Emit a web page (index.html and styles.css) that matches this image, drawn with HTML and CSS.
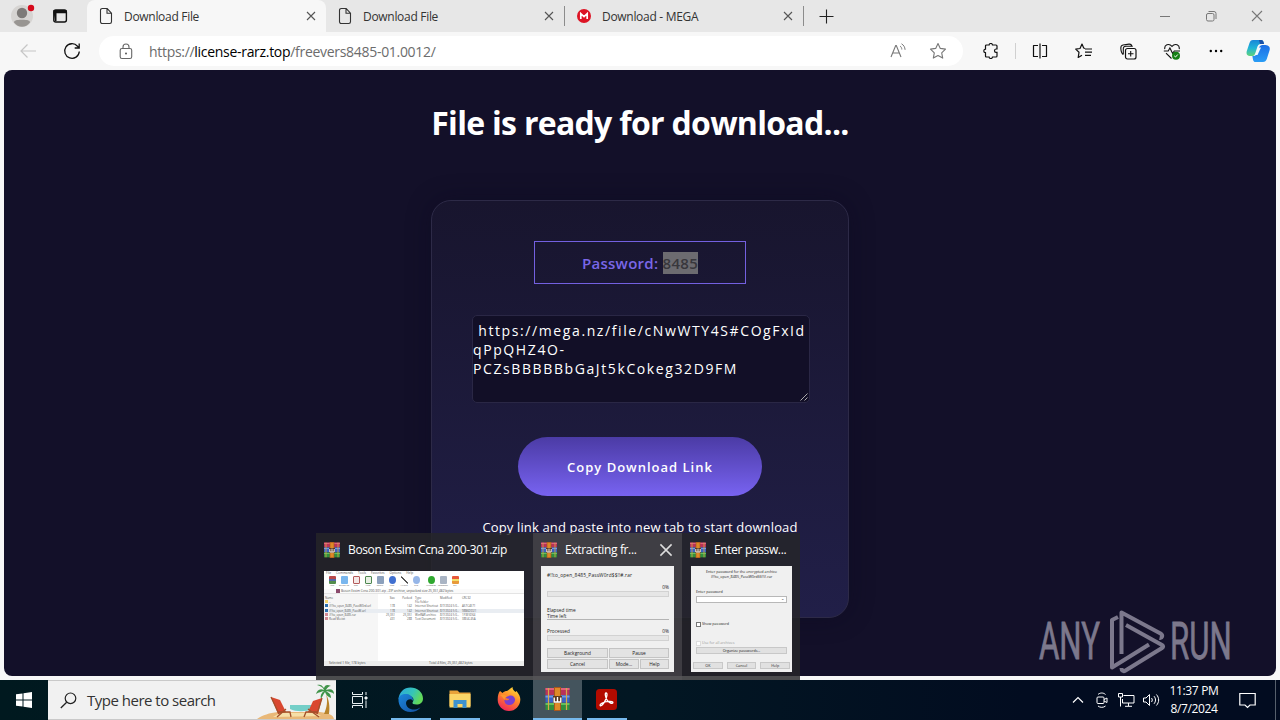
FILE: index.html
```html
<!doctype html>
<html lang="en">
  <head>
    <meta charset="UTF-8" />
    <meta name="viewport" content="width=device-width, initial-scale=1.0" />
    <title>Download File</title>
    <link rel="stylesheet" href="styles.css">
  </head>
  <body>
    <!-- shared icons -->
    <svg class="sprite" width="0" height="0">
      <symbol id="i-file" viewBox="0 0 14 18">
        <path d="M1.5 3.2a1.7 1.7 0 0 1 1.7-1.7h5l4.3 4.6v8.7a1.7 1.7 0 0 1-1.7 1.7H3.2a1.7 1.7 0 0 1-1.7-1.7zM8 1.7v4.6h4.4" fill="none" stroke="#333" stroke-width="1.1" />
      </symbol>
      <symbol id="i-close" viewBox="0 0 10 10">
        <path d="M1 1l8 8M9 1L1 9" fill="none" stroke="currentColor" stroke-width="1.1" />
      </symbol>
      <symbol id="i-rar" viewBox="0 0 24 24">
        <path d="M0 1h24v7H0z" fill="#b8325a" />
        <path d="M0 8.5h24v7H0z" fill="#3a62c4" />
        <path d="M0 16h24v7H0z" fill="#2f8f3c" />
        <path d="M0 1h24v2H0z" fill="#e0607c" />
        <path d="M0 8.5h24v2H0z" fill="#6f97ea" />
        <path d="M0 16h24v2H0z" fill="#62bf5c" />
        <path d="M3 1v22M21 1v22" stroke="#d8a84a" stroke-width="1.2" />
        <path d="M8.5 0h7v24h-7z" fill="#a8561c" />
        <path d="M9.5 1h5v22h-5z" fill="#dd8a28" />
        <path d="M7.5 9h9v7h-9z" fill="#5b3a20" />
        <path d="M8.700 10.500v4.500h6.600v-4.500M12 10v4.500" fill="none" stroke="#fff" stroke-width="1.400" />
      </symbol>
    </svg>

    <div class="browser">
      <div class="tabs">
        <div class="profile">
          <svg width="32" height="32" viewBox="0 0 32 32">
            <circle cx="16" cy="16" r="11" fill="#d6d4d2" />
            <circle cx="16" cy="13" r="5.2" fill="#7d7a78" />
            <path d="M8 22.5c0-2 2-2.8 8-2.8s8 .8 8 2.8c-2 2.8-5 4.3-8 4.3s-6-1.5-8-4.3z" fill="#989592" />
            <circle cx="25" cy="8" r="3.2" fill="#d60a1c" />
          </svg>
        </div>
        <div class="workspaces">
          <svg width="16" height="16" viewBox="0 0 16 16">
            <rect x="1.8" y="2" width="12.6" height="12" rx="2" fill="none" stroke="#111" stroke-width="1.4" />
            <path d="M1.5 2h13v3.2h-13zM1.5 4h3v9h-1.5z" fill="#111" />
          </svg>
        </div>
        <div class="tab active">
          <svg class="tab-icon" width="14" height="18"><use href="#i-file" /></svg>
          <span class="tab-title">Download File</span>
          <svg class="tab-close" width="10" height="10"><use href="#i-close" /></svg>
        </div>
        <div class="tab">
          <svg class="tab-icon" width="14" height="18"><use href="#i-file" /></svg>
          <span class="tab-title">Download File</span>
          <svg class="tab-close" width="10" height="10"><use href="#i-close" /></svg>
        </div>
        <div class="tab">
          <svg class="tab-icon" width="14" height="14" viewBox="0 0 14 14">
            <circle cx="7" cy="7" r="7" fill="#dd1425" />
            <path d="M3.8 10V4.6L7 7.6l3.2-3V10" fill="none" stroke="#fff" stroke-width="1.7" />
          </svg>
          <span class="tab-title">Download - MEGA</span>
          <svg class="tab-close" width="10" height="10"><use href="#i-close" /></svg>
        </div>
        <svg class="new-tab" width="15" height="15" viewBox="0 0 15 15">
          <path d="M7.5 .5v14M.5 7.5h14" stroke="#222" stroke-width="1.1" />
        </svg>
        <div class="window-buttons">
          <svg width="12" height="12" viewBox="0 0 12 12"><path d="M1 6.5h10" stroke="#777" /></svg>
          <svg width="12" height="12" viewBox="0 0 12 12">
            <rect x="1.5" y="3.5" width="7.5" height="7.5" rx="1.5" fill="none" stroke="#777" />
            <path d="M3.5 1.5h5.5a2 2 0 0 1 2 2v5.5" fill="none" stroke="#777" />
          </svg>
          <svg width="12" height="12" viewBox="0 0 12 12"><path d="M1 1l10 10M11 1L1 11" stroke="#777" stroke-width="1.1" /></svg>
        </div>
      </div>

      <div class="toolbar">
        <svg class="nav-back" width="18" height="16" viewBox="0 0 18 16">
          <path d="M17 8H2M8.5 1.500L2 8l6.500 6.500" fill="none" stroke="#c6c6c6" stroke-width="1.2" />
        </svg>
        <svg class="nav-reload" width="18" height="18" viewBox="0 0 18 18">
          <path d="M16.3 9.5A7.3 7.3 0 1 1 14.5 4.2L16 6M16.2 1.5V6h-4.5" fill="none" stroke="#111" stroke-width="1.3" />
        </svg>
        <div class="address">
          <svg class="lock" width="14" height="17" viewBox="0 0 14 17">
            <rect x="1.2" y="5.5" width="11.5" height="10" rx="1.8" fill="none" stroke="#666" stroke-width="1.1" />
            <path d="M4 5.5V4a3 3 0 0 1 6 0v1.5" fill="none" stroke="#666" stroke-width="1.1" />
            <circle cx="7" cy="10.5" r="1" fill="#555" />
          </svg>
          <span class="url">https://<b>license-rarz.top</b>/freevers8485-01.0012/</span>
          <svg class="read-aloud" width="16" height="16" viewBox="0 0 16 16">
            <path d="M1 14L5.7 2.5h.6L11 14M2.6 10h6.8" fill="none" stroke="#777" stroke-width="1.1" />
            <path d="M10 3c1.2.8 1.8 2 1.8 3.5M11.5 .8c2.2 1.3 3.4 3.2 3.6 6" fill="none" stroke="#777" />
          </svg>
          <svg class="star" width="18" height="18" viewBox="0 0 18 18">
            <path d="M9 1.5l2.3 4.9 5.2.7-3.8 3.7 1 5.3L9 13.500l-4.700 2.600 1-5.300L1.500 7.100l5.200-.7z" fill="none" stroke="#777" stroke-width="1.1" stroke-linejoin="round" />
          </svg>
        </div>
        <div class="tools">
          <div class="tool">
            <svg width="16" height="16" viewBox="0 0 16 16">
              <path d="M3.5 2h2.6c.1-2 3.3-2 3.4 0h3.5c.6 0 1 .4 1 1v3h-1c-2 .1-2 3.3 0 3.4h1V13c0 .6-.4 1-1 1H9.5c-.1 2-3.3 2-3.4 0H3.5c-.6 0-1-.4-1-1V9.7c-2.3-.1-2.3-3.4 0-3.5V3c0-.6.4-1 1-1z" fill="none" stroke="#111" stroke-width="1.2" />
            </svg>
          </div>
          <div class="tool-sep"></div>
          <div class="tool">
            <svg width="16" height="16" viewBox="0 0 16 16">
              <path d="M6 2.5H1.5v11H6M10 2.5h4.5v11H10M8 .5v15" fill="none" stroke="#111" stroke-width="1.2" stroke-linejoin="round" />
            </svg>
          </div>
          <div class="tool">
            <svg width="18" height="16" viewBox="0 0 18 16">
              <path d="M10 5.5L8.7 5 7 1 5 5.5l-4.3.6L4 9.3 3.2 14.500 7 12.200M10 6h7M10 9.200h7M10 12.400h6" fill="none" stroke="#111" stroke-width="1.2" stroke-linejoin="round" />
            </svg>
          </div>
          <div class="tool">
            <svg width="17" height="17" viewBox="0 0 17 17">
              <rect x="5.5" y="5.5" width="10.5" height="10.5" rx="2" fill="none" stroke="#111" stroke-width="1.2" />
              <path d="M10.7 8v5.500M8 10.700h5.500M3.200 11.500C1.500 10.500 1 8.500 .8 5.300 .7 3 1.500 2.300 3 2l6-.9c1.800-.2 2.500.5 2.900 2M3.300 11.500V6c0-2 .8-2.700 2.500-2.700h7" fill="none" stroke="#111" stroke-width="1.1" />
            </svg>
          </div>
          <div class="tool">
            <svg width="18" height="17" viewBox="0 0 18 17">
              <path d="M1.8 6.2C1 2 5.8-.3 9 3.3 12.200-.3 17 2 16.200 6.200M.8 8h4.400l1.700-3 2.700 5.500L11.300 8H17M3 10.200l5.500 5.300" fill="none" stroke="#111" stroke-width="1.1" />
              <circle cx="13" cy="12.7" r="4" fill="#168016" />
              <path d="M11.2 12.800l1.300 1.200 2.300-2.500" fill="none" stroke="#fff" />
            </svg>
          </div>
          <div class="tool">
            <svg width="14" height="4" viewBox="0 0 14 4">
              <circle cx="1.8" cy="2" r="1.2" /><circle cx="7" cy="2" r="1.2" /><circle cx="12.2" cy="2" r="1.2" />
            </svg>
          </div>
          <div class="tool copilot">
            <svg width="24" height="24" viewBox="0 0 24 24">
              <defs>
                <linearGradient id="cop-a" x1="0" y1="0" x2="0" y2="1"><stop offset="0" stop-color="#1a86d8" /><stop offset=".5" stop-color="#20b4d8" /><stop offset="1" stop-color="#5fd37a" /></linearGradient>
                <linearGradient id="cop-b" x1="0" y1="1" x2="0" y2="0"><stop offset="0" stop-color="#2a9df5" /><stop offset="1" stop-color="#1c6ee6" /></linearGradient>
              </defs>
              <path d="M7 1h8c2 0 2.500 1.500 3 4h-3c-2.500 0-3.200 1.500-4 4l-2 6c-.8 1.700-1.800 2-4 2C1 17 0 15 .8 12L3.500 4C4.200 2 5 1 7 1z" fill="url(#cop-a)" />
              <path d="M17 23H9.500C7.500 23 7 21.500 6.400 17c2.600 0 3.800-.5 4.700-3.500l2-5C14 6.500 15 6 18 6c5 0 6.500 2 5.500 5.500L20.800 20c-.8 2-1.800 3-3.800 3z" fill="url(#cop-b)" />
              <path d="M13 1h2c2 0 2.500 1.500 3 4h-4z" fill="#184fa8" />
              <path d="M12.500 8.500h2.500l-3.500 7.500H9z" fill="#f2fbff" />
            </svg>
          </div>
        </div>
      </div>

      <main class="page">
        <h1>File is ready for download...</h1>
        <div class="card">
          <div class="password">Password: <mark>8485</mark></div>
          <div class="link-box">
            <p>&nbsp;https://mega.nz/file/cNwWTY4S#COgFxId<br>qPpQHZ4O-<br>PCZsBBBBBbGaJt5kCokeg32D9FM</p>
            <svg class="grip" width="8" height="8" viewBox="0 0 8 8"><path d="M.5 7.500l7-7M4.500 7.500l3-3" stroke="#aaa" /></svg>
          </div>
          <button class="copy-btn">Copy Download Link</button>
          <p class="hint">Copy link and paste into new tab to start download</p>
        </div>
        <svg class="watermark" width="196" height="66" viewBox="0 0 196 66">
          <g fill="#7c788c" stroke="#7c788c" stroke-width=".8">
            <text transform="translate(1 51) scale(.6 1)">ANY</text>
            <text transform="translate(132 51) scale(.6 1)">RUN</text>
          </g>
          <path d="M80 9l-6 3v47.500l37-23M83.500 46V4.500l39 21c3 2 1.500 5-1 4.500M88 17l36 20c1.500 1 1.500 2 0 3L87.500 62.500c-2.500 1.500-4 0-4-2.500" fill="none" stroke="#7c788c" stroke-width="4" stroke-linejoin="round" />
        </svg>
      </main>
    </div>

    <div class="taskbar">
      <div class="start">
        <svg width="16" height="16" viewBox="0 0 16 16">
          <path d="M0 2.300L6.500 1.400v6.100H0zM7.500 1.200L16 0v7.500H7.500zM0 8.500h6.500v6.100L0 13.700zM7.500 8.500H16V16l-8.500-1.200z" fill="#fff" />
        </svg>
      </div>
      <div class="search">
        <svg class="search-icon" width="17" height="17" viewBox="0 0 17 17">
          <circle cx="10.5" cy="6.3" r="5.3" fill="none" stroke="#222" stroke-width="1.2" />
          <path d="M6.7 10.200L.8 16" stroke="#222" stroke-width="1.3" />
        </svg>
        <span>Type here to search</span>
        <svg class="beach" width="80" height="38" viewBox="0 0 80 38">
          <path d="M1 38c6-4 12-6 21-7h42c9 1 13 3 14 7z" fill="#e9b878" />
          <path d="M24 32h35l6 3-48 1z" fill="#f6dfa8" />
          <path d="M34 24h22v4c-6 3-16 3-22 0z" fill="#74cfc8" />
          <path d="M70 13c3 6 4 12 3 20h-5c3-7 4-13 2-20z" fill="#b8842c" />
          <path d="M68 9c-5-2-7 1-8 4 3-2 5-2 8-3-3 2-4 5-3 8 1-2 2-4 4-7 1 3 3 5 6 6 0-4-2-5-5-7 4 1 6 1 8 3 0-4-3-6-8-4 1-2 3-4 5-4-4-2-6-1-7 2-2-3-4-4-7-3 3 1 6 2 7 5z" fill="#3f9348" />
          <path d="M15 16l9 3 6 12-8 2z" fill="#d9472f" />
          <path d="M66 17l-9 3-5 11 10 2z" fill="#d9472f" />
          <path d="M15 16l8 17M22 31h12l1 5M30 28l-9 8M66 17l-5 16M61 31H50l-2 5M52 28l11 8" fill="none" stroke="#a3502a" stroke-width="1.3" />
        </svg>
      </div>
      <div class="task-view">
        <svg width="16" height="16" viewBox="0 0 16 16" fill="none" stroke="#e8f0f2">
          <path d="M.5 0v2.500h10V0M.5 16v-2.500h10V16M.5 4.500h10v7H.5zM14 0v3M14 8.500V16" />
          <path d="M13 5h2v2h-2z" fill="#fff" />
        </svg>
      </div>
      <div class="apps">
        <div class="app running">
          <svg width="25" height="25" viewBox="0 0 25 25">
            <defs>
              <linearGradient id="edge-a" x1="0" y1="0" x2="1" y2=".4"><stop offset="0" stop-color="#2ba6e0" /><stop offset=".6" stop-color="#35c4b8" /><stop offset="1" stop-color="#62d95a" /></linearGradient>
              <linearGradient id="edge-b" x1="0" y1="0" x2="1" y2="1"><stop offset="0" stop-color="#1b87dc" /><stop offset="1" stop-color="#1550a0" /></linearGradient>
            </defs>
            <path d="M.5 12.500C1 5 6 .5 12.500 .5S25 5 25 11.500c0 4-3 6-6.500 6-3 0-4.500-1-4-2 2-2.500 1-6.500-4-6.500C6 9 1 10 .5 12.500z" fill="url(#edge-a)" />
            <path d="M.5 12C1 8 5 6.500 9 7c4 .5 6.500 4 6 7-1-3-7-2-7 2s4 7 9 6.500c2-.2 4-1.200 5.500-2C20 23.500 16.500 25 12.500 25 5 25 0 19 .5 12z" fill="url(#edge-b)" />
          </svg>
        </div>
        <div class="app running">
          <svg width="22" height="20" viewBox="0 0 22 20">
            <path d="M.5 1.500h8l2 2h11V17H.5z" fill="#e8a33a" />
            <path d="M.5 5h21v13.500H.5z" fill="#fbd668" />
            <path d="M4.500 19v-8h13v8h-4v-4h-5v4z" fill="#3d92cf" />
          </svg>
        </div>
        <div class="app">
          <svg width="24" height="24" viewBox="0 0 24 24">
            <defs><linearGradient id="fox" x1=".8" y1="0" x2=".3" y2="1"><stop offset="0" stop-color="#ffe03a" /><stop offset=".45" stop-color="#ff8a2a" /><stop offset="1" stop-color="#f0245a" /></linearGradient></defs>
            <path d="M3 4l2.500 2C7 4.500 8.500 4 10 4c2-1 3-2.500 5.500-4 0 2.500 1.500 3.500 3 5l1-1c3 4 4 6 3.800 9-.3 6-5 11-11.300 11S.8 19 .7 13C.6 9 1.500 6 3 4z" fill="url(#fox)" />
            <path d="M8 9c2 1.500 3 0 5-.5 3-.5 5.500 2 5 5s-3.500 5-6.500 4.500S7 15 7.500 12.500c1.500 1.500 4.500 1 5-1-2 .5-4 0-4.500-2.500z" fill="#7a3fd0" />
            <path d="M3 8c3-1.500 6 0 7 2-1.500 0-2.500 1-2.500 3C6 11 5 9 3 8z" fill="#ff9a2e" />
          </svg>
        </div>
        <div class="app selected">
          <svg width="25" height="24"><use href="#i-rar" /></svg>
        </div>
        <div class="app running">
          <svg width="21" height="21" viewBox="0 0 21 21">
            <rect width="21" height="21" rx="3.5" fill="#b30b00" />
            <path d="M10 4c1.800 0 1 4.500-1.200 8.300C7 15.500 5 17.500 4.200 16.500c-1-1.400 3.500-3.600 8-4.100 3.500-.4 5 .3 4.700 1.300-.6 1.500-4.500-.2-6-3C9.500 8.300 8.600 4 10 4z" fill="none" stroke="#fff" stroke-width="1.3" />
          </svg>
        </div>
      </div>
      <div class="tray">
        <svg width="12" height="8" viewBox="0 0 12 8"><path d="M1 6.500L6 1.500l5 5" fill="none" stroke="#fff" stroke-width="1.2" /></svg>
        <svg class="camera" width="12" height="16" viewBox="0 0 12 16" fill="none" stroke="#fff">
          <rect x="1" y="5" width="7" height="6.5" rx="1" />
          <path d="M8 7.500l3-1.500v4.500L8 9M2 2.500C4 .5 7.500 .5 9.500 2.500M2 14c2 1.800 5.500 1.800 7.500 0" />
        </svg>
        <svg class="network" width="17" height="14" viewBox="0 0 17 14" fill="none" stroke="#fff">
          <path d="M5.500 2.500h10.500v7.500H4.500V6M10.500 10v3M7 13.300h7M.5 .5h4v3.500h-4zM2.500 4v9.500" />
        </svg>
        <svg class="volume" width="17" height="14" viewBox="0 0 17 14" fill="none" stroke="#fff">
          <path d="M.5 5v4h2.500l3.500 3.500v-11L3 5zM8.500 5c1 1.300 1 2.700 0 4M11 3.200c2 2.300 2 5.300 0 7.600M13.400 1.500c3 3.300 3 7.700 0 11" />
        </svg>
        <div class="clock">11:37 PM<br>8/7/2024</div>
        <svg class="notice" width="17" height="17" viewBox="0 0 17 17">
          <path d="M.8 1.500h15.400v11.500H11L8.500 15.500 6 13H.8z" fill="none" stroke="#fff" stroke-width="1.2" />
        </svg>
        <div class="show-desktop"></div>
      </div>
    </div>

    <!-- taskbar window previews -->
    <div class="previews">
      <div class="preview archive">
        <div class="preview-head">
          <svg width="16" height="16"><use href="#i-rar" /></svg>
          <span>Boson Exsim Ccna 200-301.zip</span>
        </div>
        <div class="thumb">
          <div class="mini-menu"><span>File</span><span>Commands</span><span>Tools</span><span>Favorites</span><span>Options</span><span>Help</span></div>
          <div class="mini-tools">
            <div class="mini-tool red"><i></i>Add</div>
            <div class="mini-tool sky"><i></i>Extract To</div>
            <div class="mini-tool rose"><i></i>Test</div>
            <div class="mini-tool leaf"><i></i>View</div>
            <div class="mini-tool slate"><i></i>Delete</div>
            <div class="mini-tool blue round"><i></i>Find</div>
            <div class="mini-tool wand"><i></i>Wizard</div>
            <div class="mini-tool pale round"><i></i>Info</div>
            <div class="mini-tool green round gap"><i></i>VirusScan</div>
            <div class="mini-tool gray"><i></i>Comment</div>
            <div class="mini-tool orange"><i></i>SFX</div>
          </div>
          <div class="mini-path"><i></i>Boson Exsim Ccna 200-301.zip - ZIP archive, unpacked size 25,351,482 bytes</div>
          <div class="mini-list">
            <div class="mini-row"><span>Name</span><span>Size</span><span>Packed</span><span>Type</span><span>Modified</span><span>CRC32</span></div>
            <div class="mini-row up"><span><i></i>..</span><span></span><span></span><span>File folder</span><span></span><span></span></div>
            <div class="mini-row"><span><i></i>#!!!to_open_8485_PassW0rd.url</span><span>178</span><span>142</span><span>Internet Shortcut</span><span>8/7/2024 5:0...</span><span>A57C4E71</span></div>
            <div class="mini-row"><span><i></i>#!!to_open_8485_PassW.url</span><span>178</span><span>142</span><span>Internet Shortcut</span><span>8/7/2024 5:0...</span><span>98B6DD21</span></div>
            <div class="mini-row rar"><span><i></i>#!!to_open_8485.rar</span><span>25,351</span><span>25,351</span><span>WinRAR archive</span><span>8/7/2024 5:0...</span><span>1F3E5D64</span></div>
            <div class="mini-row rar"><span><i></i>Read Me.txt</span><span>431</span><span>288</span><span>Text Document</span><span>8/7/2024 5:0...</span><span>38E4C45A</span></div>
          </div>
          <div class="mini-status"><span>Selected 1 file, 178 bytes</span><span>Total 4 files, 25,351,482 bytes</span></div>
        </div>
      </div>
      <div class="preview extract">
        <div class="preview-head">
          <svg width="16" height="16"><use href="#i-rar" /></svg>
          <span>Extracting fr...</span>
          <svg class="preview-close" width="14" height="14"><use href="#i-close" /></svg>
        </div>
        <div class="thumb">
          <div class="file-name">#!!to_open_8485_PassW0rd$$!!#.rar</div>
          <div class="percent">0%</div>
          <div class="bar"></div>
          <div class="times">Elapsed time<br>Time left</div>
          <div class="processed"><span>Processed</span><span>0%</span></div>
          <div class="bar"></div>
          <div class="mini-buttons">
            <span>Background</span><span class="wide">Pause</span>
            <span>Cancel</span><span>Mode...</span><span>Help</span>
          </div>
        </div>
      </div>
      <div class="preview enter">
        <div class="preview-head">
          <svg width="16" height="16"><use href="#i-rar" /></svg>
          <span>Enter passw...</span>
        </div>
        <div class="thumb">
          <div class="ask">Enter password for the encrypted archive<br>#!!to_open_8485_PassW0rd$$!!#.rar</div>
          <div class="label">Enter password</div>
          <div class="field">⌄</div>
          <div class="check"><i></i>Show password</div>
          <div class="check off"><i></i>Use for all archives</div>
          <div class="organize">Organize passwords...</div>
          <div class="answers"><span>OK</span><span>Cancel</span><span>Help</span></div>
        </div>
      </div>
    </div>
  </body>
</html>
```
FILE: styles.css
```css
* {
  margin: 0;
  padding: 0;
  box-sizing: border-box;
}

body {
  width: 1280px;
  height: 720px;
  overflow: hidden;
  display: flex;
  flex-direction: column;
  position: relative;
  font-family: "Open Sans", "Noto Sans", sans-serif;
  background: #f7f7f7;
}

svg {
  display: block;
  flex-shrink: 0;
}

.sprite {
  position: absolute;
}

.browser {
  height: 680px;
  display: flex;
  flex-direction: column;
}

/* tab strip */
.tabs {
  height: 32px;
  display: flex;
  align-items: center;
  background: #e7e7e7;
  font-size: 12px;
  color: #333;
}

.profile {
  width: 32px;
  margin-left: 6px;
}

.workspaces {
  width: 49px;
  padding-left: 14px;
}

.tab {
  width: 239px;
  height: 20px;
  display: flex;
  align-items: center;
  padding: 0 10px 0 12px;
  border-right: 1px solid #8c8c8c;
}

.tab.active {
  height: 32px;
  background: #f7f7f7;
  border-right: none;
  border-radius: 8px 8px 0 0;
}

.tab-icon {
  width: 14px;
}

.tab-title {
  flex: 1;
  margin-left: 11px;
  letter-spacing: -0.3px;
}

.tab-close {
  color: #555;
}

.new-tab {
  margin-left: 15px;
}

.window-buttons {
  display: flex;
  gap: 34px;
  margin-left: auto;
  margin-right: 17px;
}

/* toolbar */
.toolbar {
  height: 38px;
  display: flex;
  align-items: center;
  background: #f7f7f7;
}

.nav-back {
  margin-left: 19px;
}

.nav-reload {
  margin-left: 26px;
}

.address {
  width: 864px;
  height: 30px;
  margin-left: 18px;
  padding: 0 16px 0 20px;
  display: flex;
  align-items: center;
  background: #fff;
  border-radius: 15px;
}

.url {
  flex: 1;
  margin-left: 16px;
  font-size: 14px;
  letter-spacing: -0.3px;
  color: #6c6c6c;
}

.url b {
  font-weight: 400;
  color: #000;
}

.star {
  margin-left: 23px;
}

.tools {
  display: flex;
  margin-left: 6px;
}

.tool {
  width: 44px;
  height: 30px;
  display: flex;
  align-items: center;
  justify-content: center;
}

.tool-sep {
  width: 1px;
  height: 16px;
  margin: 7px 2px;
  background: #d0d0d0;
}

.copilot {
  width: 40px;
}

/* page */
.page {
  position: relative;
  height: 606px;
  margin: 0 4px;
  display: flex;
  flex-direction: column;
  align-items: center;
  background: #131029;
  border-radius: 8px;
  color: #fff;
}

h1 {
  margin-top: 31px;
  font-size: 32px;
  line-height: 44px;
  letter-spacing: -0.7px;
  white-space: nowrap;
}

.card {
  width: 418px;
  height: 418px;
  margin-top: 55px;
  padding-top: 40px;
  display: flex;
  flex-direction: column;
  align-items: center;
  background: linear-gradient(#18152e, #211f48);
  border: 1px solid #2d2a47;
  border-radius: 20px;
  box-shadow: 0 0 24px rgba(10, 8, 30, 0.4);
}

.password {
  width: 212px;
  height: 43px;
  border: 1px solid #7360e0;
  color: #7a67e8;
  font-size: 15px;
  font-weight: 600;
  line-height: 42px;
  letter-spacing: 0.3px;
  text-align: center;
}

.password mark {
  display: inline-block;
  height: 22px;
  line-height: 23px;
  background: #6c6b70;
  color: #38373c;
}

.link-box {
  position: relative;
  width: 338px;
  height: 88px;
  margin-top: 31px;
  margin-left: 2px;
  padding-top: 5px;
  background: #120f27;
  border: 1px solid #2a2745;
  border-radius: 5px;
  font-size: 14px;
  line-height: 19px;
  letter-spacing: 1.6px;
  white-space: nowrap;
}

.grip {
  position: absolute;
  right: 1px;
  bottom: 1px;
}

.copy-btn {
  width: 244px;
  height: 59px;
  margin-top: 34px;
  border: none;
  border-radius: 30px;
  background: linear-gradient(#4b3ba5, #7863f1);
  color: #fff;
  font-family: inherit;
  font-size: 13px;
  font-weight: 600;
  letter-spacing: 1px;
}

.hint {
  margin-top: 21px;
  font-size: 13px;
  line-height: 20px;
  letter-spacing: 0.14px;
  white-space: nowrap;
}

.watermark {
  position: absolute;
  right: 42px;
  bottom: 2px;
  font-family: Roboto, sans-serif;
  font-size: 52px;
}

/* taskbar */
.taskbar {
  height: 40px;
  display: flex;
  background: linear-gradient(90deg, #00191f, #021723 50%, #020c20 80%);
  color: #fff;
}

.start,
.task-view {
  width: 48px;
  display: flex;
  align-items: center;
  justify-content: center;
}

.search {
  width: 288px;
  display: flex;
  align-items: center;
  padding-left: 12px;
  background: #f1f1f1;
  border-top: 1px solid #c9c9c9;
  border-bottom: 1px solid #c9c9c9;
  color: #333;
  font-size: 15px;
}

.search span {
  margin-left: 10px;
  letter-spacing: -0.5px;
  white-space: nowrap;
}

.beach {
  margin-left: auto;
}

.apps {
  display: flex;
  padding-left: 2px;
}

.app {
  width: 49px;
  display: flex;
  align-items: center;
  justify-content: center;
  border-bottom: 2px solid transparent;
}

.app.running {
  background: linear-gradient(#76b9ed, #76b9ed) center bottom / 40px 2px no-repeat border-box;
}

.app.selected {
  background: #44545d;
  border-bottom-color: #76b9ed;
}

.tray {
  display: flex;
  align-items: center;
  margin-left: auto;
}

.camera {
  margin-left: 12px;
}

.network {
  margin-left: 10px;
}

.volume {
  margin-left: 8px;
}

.clock {
  width: 52px;
  margin-left: 8px;
  font-size: 12px;
  line-height: 18px;
  letter-spacing: -0.35px;
  text-align: center;
  white-space: nowrap;
}

.notice {
  margin-left: 19px;
}

.show-desktop {
  width: 5px;
  height: 40px;
  margin-left: 19px;
  border-left: 1px solid #56606c;
}

/* window previews over the taskbar */
.previews {
  position: absolute;
  left: 316px;
  bottom: 40px;
  height: 147px;
  display: flex;
  background: rgba(38, 38, 40, 0.82);
}

.preview {
  padding: 8px 8px 0;
}

.preview.archive {
  width: 217px;
}

.preview.extract {
  width: 149px;
  background: rgba(90, 88, 92, 0.5);
}

.preview.enter {
  width: 118px;
}

.preview-head {
  height: 17px;
  display: flex;
  align-items: center;
  font-size: 12px;
  white-space: nowrap;
}

.preview-head span {
  margin-left: 8px;
  color: #fff;
  letter-spacing: -0.36px;
}

.preview-close {
  margin-left: auto;
  margin-right: 1px;
  color: #ddd;
}

.thumb {
  height: 106px;
  margin-top: 8px;
  overflow: hidden;
  background: #f0f0f0;
  color: #222;
  font-size: 4.8px;
  line-height: 6px;
  white-space: nowrap;
}

.archive .thumb {
  width: 200px;
  height: 95px;
  margin-top: 13px;
  display: flex;
  flex-direction: column;
  background: #fff;
  color: #555;
  font-size: 3.2px;
  line-height: 4px;
}

.extract .thumb {
  width: 133px;
  padding: 6px 5px 0 6px;
}

.enter .thumb {
  width: 101px;
  margin-left: 1px;
  padding: 4px 5px 0;
  font-size: 3.7px;
  line-height: 4.5px;
}

.file-name {
  letter-spacing: 0.15px;
}

/* archive window */
.mini-menu {
  display: flex;
  gap: 5px;
  padding-left: 2px;
}

.mini-tools {
  height: 14px;
  display: flex;
  padding-top: 1px;
}

.mini-tool {
  width: 12px;
  display: flex;
  flex-direction: column;
  align-items: center;
  font-size: 2.2px;
  line-height: 4px;
}

.mini-tool:first-child {
  margin-left: 2px;
}

.mini-tool i {
  width: 7px;
  height: 8px;
  border-radius: 1px;
  background: #999;
}

.mini-tool.gap {
  margin-left: 3px;
}

.mini-tool.round i {
  border-radius: 50%;
}

.mini-tool.red i {
  background: linear-gradient(#b8484a 35%, #5566a8 35% 65%, #538c4c 65%);
}

.mini-tool.sky i {
  background: #79b6ee;
}

.mini-tool.rose i {
  background: #f4e8e6;
  border: 1px solid #b35a5a;
}

.mini-tool.leaf i {
  background: #e8f0e4;
  border: 1px solid #4e8750;
}

.mini-tool.slate i {
  background: #8ba0bc;
}

.mini-tool.blue i {
  background: #3f6fd0;
}

.mini-tool.wand i {
  background: linear-gradient(45deg, transparent 42%, #555 42% 58%, transparent 58%);
}

.mini-tool.pale i {
  background: #96b6e8;
}

.mini-tool.green i {
  background: #2fa82f;
}

.mini-tool.gray i {
  background: #a9b4c4;
}

.mini-tool.orange i {
  background: linear-gradient(#e8583a 35%, #f2e06a 35% 60%, #e89a3a 60%);
}

.mini-path {
  height: 5px;
  display: flex;
  padding-left: 12px;
  border-bottom: 1px solid #e4e4e4;
  background: #fafafa;
}

.mini-path i {
  width: 4px;
  height: 4px;
  margin-right: 1px;
  background: #8a4a6c;
}

.mini-list {
  flex: 1;
  padding-top: 2px;
  background: linear-gradient(90deg, #f6f6f6 54px, #fff 54px);
}

.mini-row {
  display: grid;
  grid-template-columns: 56px 14px 17px 28px 22px 20px;
  height: 4.2px;
  padding-left: 1px;
  font-size: 2.9px;
}

.mini-row:nth-child(4) {
  background: #e9edf2;
}

.mini-row span:nth-child(2),
.mini-row span:nth-child(3) {
  text-align: right;
}

.mini-row span:nth-child(4) {
  padding-left: 3px;
}

.mini-row i {
  display: inline-block;
  width: 3px;
  height: 3px;
  margin-right: 1px;
  background: #2c6fae;
}

.mini-row.up i {
  background: #f4d470;
}

.mini-row.rar i {
  background: #d48a94;
}

.mini-status {
  height: 5px;
  display: flex;
  padding-left: 5px;
  background: #ececec;
}

.mini-status span:first-child {
  width: 100px;
}

/* extraction window */
.percent {
  margin-top: 6px;
  text-align: right;
}

.bar {
  height: 6px;
  margin-top: 1px;
  background: #e6e6e6;
  border: 1px solid #d2d2d2;
}

.times {
  height: 13px;
  margin-top: 10px;
  border-bottom: 1px solid #b4b4b4;
}

.processed {
  display: flex;
  justify-content: space-between;
  margin-top: 8px;
}

.mini-buttons {
  display: grid;
  grid-template-columns: 61px 30px 29px;
  gap: 1px;
  margin-top: 7px;
  text-align: center;
}

.mini-buttons span {
  height: 10px;
  line-height: 8px;
  background: #e3e3e3;
  border: 1px solid #c4c4c4;
}

.mini-buttons .wide {
  grid-column: span 2;
}

/* password window */
.ask {
  text-align: center;
}

.label {
  margin-top: 11px;
}

.field {
  height: 7px;
  margin-top: 1px;
  padding-right: 2px;
  background: #fff;
  border: 1px solid #b8b8b8;
  line-height: 3px;
  text-align: right;
}

.check {
  display: flex;
  align-items: center;
  margin-top: 19px;
}

.check i {
  width: 5px;
  height: 5px;
  margin-right: 1px;
  background: #fff;
  border: 1px solid #777;
}

.check.off {
  margin-top: 14px;
  color: #999;
}

.check.off i {
  border-color: #ddd;
}

.organize,
.answers span {
  height: 7px;
  background: #e1e1e1;
  border: 1px solid #c8c8c8;
  line-height: 5px;
  text-align: center;
}

.organize {
  margin-top: 1px;
}

.answers {
  display: flex;
  gap: 4px;
  margin: 8px -3px 0;
}

.answers span {
  flex: 1;
}
```
